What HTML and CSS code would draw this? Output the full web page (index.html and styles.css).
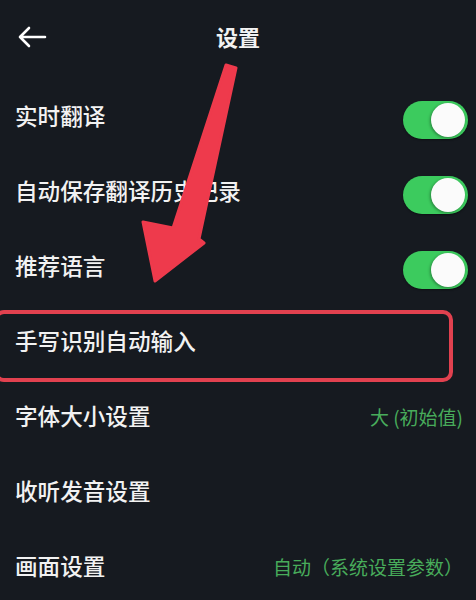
FILE: index.html
```html
<!DOCTYPE html>
<html lang="zh-CN">
<head>
  <meta charset="UTF-8" />
  <meta name="viewport" content="width=device-width, initial-scale=1.0"/>
  <title>设置</title>
  <link rel="stylesheet" href="styles.css">
</head>
<body>
  <div class="screen">
    <header class="top-bar">
      <svg class="back" width="30" height="22" viewBox="0 0 30 22">
        <path d="M28 11H3M12 2L3 11l9 9" fill="none" stroke="#fff" stroke-width="2.6" stroke-linecap="round" stroke-linejoin="round"/>
      </svg>
      <h1>设置</h1>
    </header>

    <div class="row">
      <span class="label">实时翻译</span>
      <span class="switch on"><span class="knob"></span></span>
    </div>
    <div class="row">
      <span class="label">自动保存翻译历史记录</span>
      <span class="switch on"><span class="knob"></span></span>
    </div>
    <div class="row">
      <span class="label">推荐语言</span>
      <span class="switch on"><span class="knob"></span></span>
    </div>
    <div class="row highlighted">
      <span class="label">手写识别自动输入</span>
      <span class="mark-box"></span>
    </div>
    <div class="row">
      <span class="label">字体大小设置</span>
      <span class="value">大 (初始值)</span>
    </div>
    <div class="row">
      <span class="label">收听发音设置</span>
    </div>
    <div class="row">
      <span class="label">画面设置</span>
      <span class="value">自动（系统设置参数）</span>
    </div>

    <!-- annotation arrow drawn over the list -->
    <svg class="pointer" width="476" height="600" viewBox="0 0 476 600">
      <polygon points="226,65 236,68 199,239 204,243 155,281 143,222 173,228"
               fill="#ee3a4c" stroke="#ee3a4c" stroke-width="3" stroke-linejoin="round"/>
    </svg>
  </div>
</body>
</html>
```

FILE: styles.css
```css
body {
  margin: 0;
  background: #161a20;
  font-family: "Noto Sans CJK SC", "Noto Sans", sans-serif;
  color: #f2f2f2;
}
.screen {
  position: relative;
  width: 476px;
  height: 600px;
  overflow: hidden;
  background: #161a20;
}
.top-bar {
  height: 80px;
  position: relative;
  display: flex;
  align-items: flex-start;
  justify-content: center;
}
.top-bar h1 {
  margin: 21px 0 0;
  font-size: 22px;
  line-height: 30px;
  font-weight: 700;
}
.back {
  position: absolute;
  left: 17px;
  top: 26px;
}
.row {
  height: 75px;
  display: flex;
  align-items: center;
  justify-content: space-between;
  padding: 0 8px 0 15px;
  position: relative;
}
.label {
  font-size: 22.6px;
  line-height: 30px;
  font-weight: 500;
  margin-top: -3px;
}
.value {
  font-size: 19px;
  color: #48ac5b;
  margin-right: 5px;
  margin-top: -2px;
}
.switch {
  width: 65px;
  height: 38px;
  margin-top: 4px;
  border-radius: 19px;
  background: #3ccb5e;
  position: relative;
  box-shadow: 0 1px 2px rgba(0, 0, 0, 0.4);
}
.switch .knob {
  position: absolute;
  right: 3px;
  top: 2px;
  width: 34px;
  height: 34px;
  border-radius: 50%;
  background: #fbfbfb;
  box-shadow: -1px 1px 3px rgba(0, 0, 0, 0.35);
}
.mark-box {
  position: absolute;
  left: -6px;
  right: 23px;
  top: 5px;
  bottom: -2px;
  border: 4px solid #e1414f;
  border-radius: 10px;
}
.pointer {
  position: absolute;
  left: 0;
  top: 0;
  pointer-events: none;
}
```
